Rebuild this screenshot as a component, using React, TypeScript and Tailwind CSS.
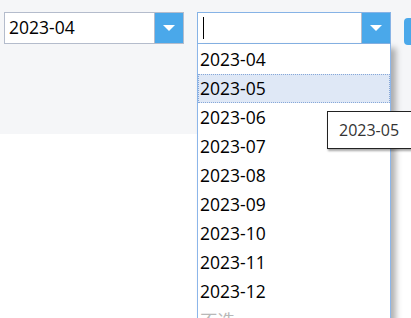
const months = ['2023-04', '2023-05', '2023-06', '2023-07', '2023-08', '2023-09', '2023-10', '2023-11', '2023-12'];

const Arrow = () => (
  <div className="w-[29px] h-full bg-[#4aa8ea] border-l border-[#b4bccc] flex items-center justify-center">
    <div className="w-0 h-0 border-l-[6px] border-r-[6px] border-t-[6px] border-l-transparent border-r-transparent border-t-white" />
  </div>
);

export default function App() {
  return (
    <div className="relative w-[411px] h-[318px] overflow-hidden bg-white font-['Open_Sans','Noto_Sans_CJK_SC',sans-serif] text-[17.5px] text-black">
      <div className="h-[134px] bg-[#f5f6f8] pt-3 pl-1 flex items-start">
        {/* month select */}
        <div className="shrink-0 w-[180px] h-[32px] bg-white border border-[#b4bccc] flex">
          <div className="flex-1 flex items-center pl-[4px] leading-none">2023-04</div>
          <Arrow />
        </div>

        {/* open select */}
        <div className="relative shrink-0 ml-[13px] w-[194px] h-[32px]">
          <div className="h-full bg-white border border-[#86b3e6] flex">
            <div className="flex-1 flex items-center pl-[5px]">
              <div className="w-px h-[22px] bg-black" />
            </div>
            <Arrow />
          </div>
          <div className="absolute top-[32px] left-0 w-[194px] h-[300px] pt-px bg-white border-x border-[#8cb6ea] shadow-[5px_4px_6px_rgba(0,0,0,0.3)]">
            {months.map((m) =>
              m === '2023-05' ? (
                <div
                  key={m}
                  className="h-[29px] flex items-center pl-[1px] bg-[#dfe8f6] border border-dotted border-[#86a7d8]"
                >
                  {m}
                </div>
              ) : (
                <div key={m} className="h-[29px] flex items-center pl-[2px]">
                  {m}
                </div>
              )
            )}
            <div className="h-[29px] flex items-start pt-[1px] pl-[2px] text-[#b8b8b8]">不选</div>
          </div>
        </div>

        <div className="shrink-0 ml-[13px] mt-[6px] w-[20px] h-[27px] rounded-[4px] bg-[#4aa8ea]" />
      </div>

      {/* tooltip */}
      <div className="absolute left-[327px] top-[111px] w-[100px] h-[38px] bg-white border border-[#222] shadow-[1px_2px_2px_rgba(0,0,0,0.35)] flex items-center pl-[11px] text-[16px] text-[#333]">
        2023-05
      </div>
    </div>
  );
}
